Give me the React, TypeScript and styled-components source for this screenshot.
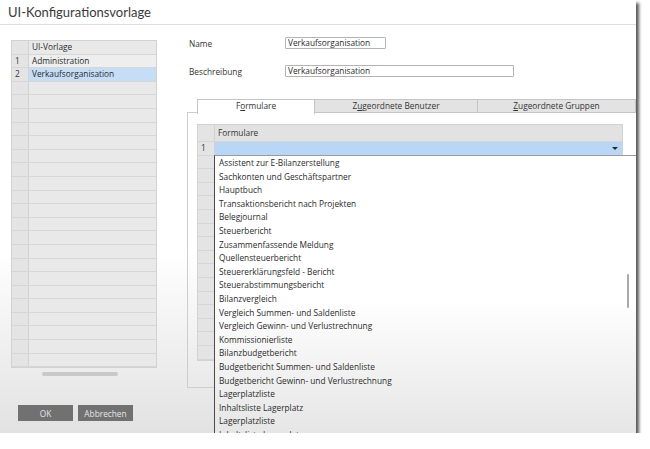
import React from "react";
import styled, { createGlobalStyle } from "styled-components";

const GlobalStyle = createGlobalStyle`
  html, body {
    margin: 0;
    padding: 0;
    background: #ffffff;
    font-family: "Open Sans", "DejaVu Sans", sans-serif;
    color: #333;
  }
`;

const ROW = 13.6;
const TEXT = "8.3px";

const WindowFrame = styled.div`
  position: relative;
  width: 636px;
  height: 433px;
  background: linear-gradient(#ffffff 0%, #ffffff 58%, #e2e2e2 100%);
  box-shadow: 3px 3px 3px rgba(0, 0, 0, 0.65);
  display: flex;
  flex-direction: column;
  overflow: hidden;
`;

const TitleBar = styled.div`
  height: 24px;
  border-bottom: 1px solid #dedede;
  display: flex;
  align-items: center;
  padding-left: 8px;
  font-family: Lato, "Open Sans", sans-serif;
  font-size: 13px;
  color: #3a3a3a;
`;

const Body = styled.div`
  flex: 1;
  display: flex;
`;

const LeftPane = styled.div`
  width: 187px;
  display: flex;
  flex-direction: column;
  padding: 15px 0 12px 11px;
  box-sizing: border-box;
`;

const Grid = styled.div<{ $width: number }>`
  width: ${(p) => p.$width}px;
  border: 1px solid #d2d2d2;
  background: #e9e9e9;
  box-sizing: border-box;
`;

const GridRow = styled.div<{ $height?: number }>`
  display: flex;
  height: ${(p) => p.$height ?? ROW}px;
  border-bottom: 1px solid #d6d6d6;
  box-sizing: border-box;
  font-size: ${TEXT};
  line-height: ${(p) => (p.$height ?? ROW) - 1}px;
`;

const NumCell = styled.div<{ $width?: number }>`
  width: ${(p) => p.$width ?? 17}px;
  flex-shrink: 0;
  border-right: 1px solid #d2d2d2;
  box-sizing: border-box;
  padding-left: 3px;
  background: #e4e4e4;
  color: #333;
`;

const MainCell = styled.div<{ $selected?: boolean; $plain?: boolean }>`
  flex: 1;
  padding-left: 3px;
  position: relative;
  background: ${(p) =>
    p.$selected ? "#c6ddf6" : p.$plain ? "#eeeeee" : "#e9e9e9"};
  color: #2a2a2a;
`;

const HScroll = styled.div`
  width: 76px;
  height: 4px;
  border-radius: 2px;
  background: #c9c9c9;
  margin: 4px 0 0 31px;
`;

const ButtonRow = styled.div`
  margin-top: auto;
  display: flex;
  gap: 5px;
  padding-left: 7px;
`;

const Button = styled.button`
  width: 55px;
  height: 16px;
  border: 0;
  padding: 0;
  background: #717171;
  color: #e6e6e6;
  font-family: "Open Sans", "DejaVu Sans", sans-serif;
  font-size: ${TEXT};
`;

const RightPane = styled.div`
  flex: 1;
  display: flex;
  flex-direction: column;
  padding-top: 12px;
`;

const FieldRow = styled.div`
  display: flex;
  align-items: center;
  height: 12px;
  margin-bottom: 16px;
  padding-left: 2px;
`;

const Label = styled.div`
  width: 96px;
  font-size: ${TEXT};
  color: #333;
`;

const Input = styled.div<{ $width: number }>`
  width: ${(p) => p.$width}px;
  height: 12px;
  border: 1px solid #b3b3b3;
  border-radius: 1px;
  box-sizing: border-box;
  background: #fff;
  font-size: ${TEXT};
  line-height: 10px;
  padding-left: 2px;
  color: #2a2a2a;
`;

const TabStrip = styled.div`
  display: flex;
  margin: 6px 0 0 10px;
  position: relative;
  z-index: 1;
`;

const Tab = styled.div<{ $active?: boolean; $width: number }>`
  width: ${(p) => p.$width}px;
  height: ${(p) => (p.$active ? 15 : 14)}px;
  box-sizing: border-box;
  border: 1px solid #c4c4c4;
  border-bottom: ${(p) => (p.$active ? "0" : "1px solid #c4c4c4")};
  border-left: ${(p) => (p.$active ? "1px solid #c4c4c4" : "0")};
  background: ${(p) => (p.$active ? "#ffffff" : "#e3e3e3")};
  font-size: ${TEXT};
  line-height: 12px;
  text-align: center;
  color: #333;
  u {
    text-decoration: underline;
  }
`;

const Panel = styled.div`
  margin-top: -2px;
  height: 276px;
  border: 1px solid #cdcdcd;
  border-right: 0;
  box-sizing: border-box;
  padding: 11px 0 0 9px;
`;

const HeadCell = styled.div`
  flex: 1;
  padding-left: 3px;
  background: #e2e2e2;
  color: #333;
`;

const ValueCell = styled(MainCell)`
  background: #b9d6f7;
`;

const Arrow = styled.span`
  position: absolute;
  right: 4px;
  top: 5px;
  width: 0;
  height: 0;
  border-left: 3px solid transparent;
  border-right: 3px solid transparent;
  border-top: 3px solid #1d2a3a;
`;

const Dropdown = styled.div`
  position: absolute;
  left: 214px;
  top: 155px;
  right: 0;
  bottom: 0;
  border-left: 1px solid #4a4a4a;
  border-top: 1px solid #9a9a9a;
  background: linear-gradient(#ffffff 0%, #ffffff 52%, #e6e6e6 100%);
  overflow: hidden;
  z-index: 5;
`;

const Item = styled.div`
  height: ${ROW}px;
  line-height: ${ROW}px;
  padding-left: 4px;
  font-size: ${TEXT};
  color: #2a2a2a;
  white-space: nowrap;
`;

const Thumb = styled.div`
  position: absolute;
  right: 7px;
  top: 118px;
  width: 2px;
  height: 34px;
  background: #a9a9a9;
  border-radius: 1px;
`;

const templates = ["Administration", "Verkaufsorganisation"];

const forms = [
  "Assistent zur E-Bilanzerstellung",
  "Sachkonten und Geschäftspartner",
  "Hauptbuch",
  "Transaktionsbericht nach Projekten",
  "Belegjournal",
  "Steuerbericht",
  "Zusammenfassende Meldung",
  "Quellensteuerbericht",
  "Steuererklärungsfeld - Bericht",
  "Steuerabstimmungsbericht",
  "Bilanzvergleich",
  "Vergleich Summen- und Saldenliste",
  "Vergleich Gewinn- und Verlustrechnung",
  "Kommissionierliste",
  "Bilanzbudgetbericht",
  "Budgetbericht Summen- und Saldenliste",
  "Budgetbericht Gewinn- und Verlustrechnung",
  "Lagerplatzliste",
  "Inhaltsliste Lagerplatz",
  "Lagerplatzliste",
  "Inhaltsliste Lagerplatz",
];

export default function App() {
  return (
    <>
      <GlobalStyle />
      <WindowFrame>
        <TitleBar>UI-Konfigurationsvorlage</TitleBar>
        <Body>
          <LeftPane>
            <Grid $width={146}>
              <GridRow>
                <NumCell />
                <MainCell>UI-Vorlage</MainCell>
              </GridRow>
              {templates.map((t, i) => (
                <GridRow key={t}>
                  <NumCell>{i + 1}</NumCell>
                  <MainCell $selected={i === 1} $plain={i === 0}>
                    {t}
                  </MainCell>
                </GridRow>
              ))}
              {Array.from({ length: 21 }).map((_, i) => (
                <GridRow key={"e" + i}>
                  <NumCell />
                  <MainCell />
                </GridRow>
              ))}
            </Grid>
            <HScroll />
            <ButtonRow>
              <Button>OK</Button>
              <Button>Abbrechen</Button>
            </ButtonRow>
          </LeftPane>
          <RightPane>
            <FieldRow>
              <Label>Name</Label>
              <Input $width={101}>Verkaufsorganisation</Input>
            </FieldRow>
            <FieldRow>
              <Label>Beschreibung</Label>
              <Input $width={229}>Verkaufsorganisation</Input>
            </FieldRow>
            <TabStrip>
              <Tab $active $width={118}>
                F<u>o</u>rmulare
              </Tab>
              <Tab $width={163}>
                Z<u>u</u>geordnete Benutzer
              </Tab>
              <Tab $width={158}>
                <u>Z</u>ugeordnete Gruppen
              </Tab>
            </TabStrip>
            <Panel>
              <Grid $width={426}>
                <GridRow $height={17}>
                  <NumCell />
                  <HeadCell>Formulare</HeadCell>
                </GridRow>
                <GridRow>
                  <NumCell>1</NumCell>
                  <ValueCell>
                    <Arrow />
                  </ValueCell>
                </GridRow>
                {Array.from({ length: 15 }).map((_, i) => (
                  <GridRow key={"f" + i}>
                    <NumCell />
                    <MainCell />
                  </GridRow>
                ))}
              </Grid>
            </Panel>
          </RightPane>
        </Body>
        <Dropdown>
          {forms.map((f, i) => (
            <Item key={i}>{f}</Item>
          ))}
          <Thumb />
        </Dropdown>
      </WindowFrame>
    </>
  );
}
